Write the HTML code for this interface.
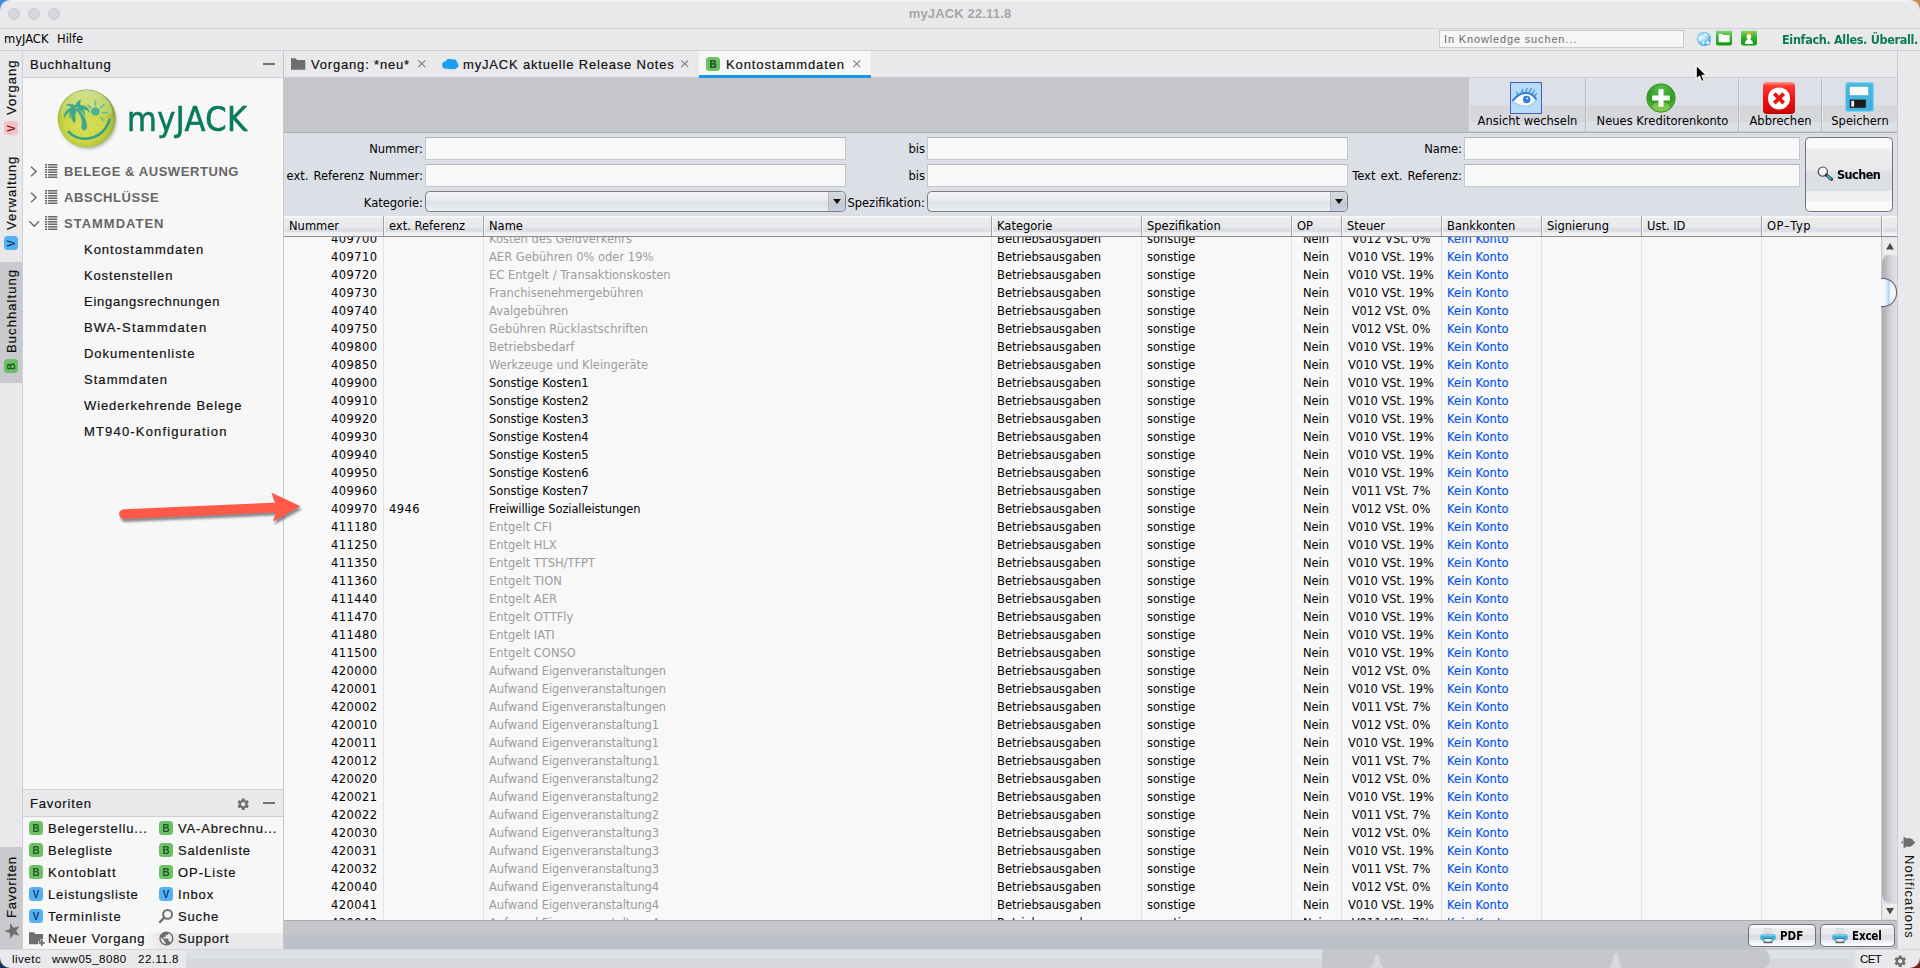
<!DOCTYPE html>
<html lang="de">
<head>
<meta charset="utf-8">
<title>myJACK 22.11.8</title>
<style>
*{box-sizing:border-box;margin:0;padding:0}
html,body{width:1920px;height:968px;overflow:hidden}
body{position:relative;background:#e9e9eb;font-family:"DejaVu Sans","Liberation Sans",sans-serif;font-size:11.5px;color:#000}
.abs{position:absolute}
svg{position:absolute;overflow:visible}
i{font-style:normal}
.lib{font-family:"Liberation Sans",sans-serif}
.dvc{font-family:"DejaVu Sans",sans-serif;transform:scaleX(.9);transform-origin:0 50%;white-space:nowrap}
/* title */
#title{left:0;top:0;width:1920px;height:29px;border-bottom:1px solid #cfd1d6;border-top:1px solid #f3f3f4;background:#e9e9eb}
#title .t{left:0;width:1920px;top:4.500px;text-align:center;font:bold 13px "Liberation Sans",sans-serif;letter-spacing:.15px;color:#a6a6a8}
.tl{width:12px;height:12px;border-radius:50%;background:#d7d8dc;border:1px solid #c6c9ce;top:7px}
#menu{left:0;top:29px;width:1920px;height:22px;border-bottom:1px solid #cdd0d5;background:#e9e9eb}
#menu span{position:absolute;top:3px;font-size:11.5px;white-space:nowrap}
/* left strip */
#lstrip{left:0;top:51px;width:23px;height:898px;border-right:1px solid #cdd0d5;background:#e9e9eb}
.vtxt{-webkit-text-stroke:.2px #111;position:absolute;white-space:nowrap;font:13px "Liberation Sans",sans-serif;letter-spacing:.85px;transform:rotate(-90deg);transform-origin:0 0;color:#111;line-height:15px;height:15px}
.badge{position:absolute;width:14px;height:14px;border-radius:3.5px;font:bold 11.5px "Liberation Sans",sans-serif;text-align:center;line-height:15px;letter-spacing:0}
.badge i{display:block;transform:scaleX(.86)}
.bg{background:#6dc066;color:#1e5a22}
.bb{background:#55b2f0;color:#0d3f73}
.bp{background:#f6c1c6;color:#8c1c1c}
/* sidebar */
#side{left:23px;top:51px;width:261px;height:898px;border-right:1px solid #c3c6cc;background:#f7f7f7}
.phead{-webkit-text-stroke:.2px #111;left:0;width:260px;height:27px;background:#e9e9eb;border-bottom:1px solid #cdd0d5;font:13px "Liberation Sans",sans-serif;letter-spacing:.85px;color:#111}
.phead span{position:absolute;left:7px;top:6px}
.tree1{left:41px;font:bold 13px "Liberation Sans",sans-serif;letter-spacing:.57px;color:#666;white-space:nowrap}
.tree2{-webkit-text-stroke:.2px #111;left:61px;font:13px "Liberation Sans",sans-serif;letter-spacing:.88px;color:#111;white-space:nowrap}
.fav{-webkit-text-stroke:.2px #111;position:absolute;font:13px "Liberation Sans",sans-serif;letter-spacing:.85px;color:#111;white-space:nowrap}
/* main */
#main{left:284px;top:51px;width:1613px;height:898px;background:#c4c6ca}
#tabs{left:0;top:0;width:1613px;height:27px;background:#e9e9eb;border-bottom:1px solid #c6c9ce}
.tab{-webkit-text-stroke:.2px #111;position:absolute;top:0;height:27px;font:13px "Liberation Sans",sans-serif;letter-spacing:.82px;color:#111;white-space:nowrap}
.tab span{position:absolute;top:6px}
.tbtn{position:absolute;top:0;height:54px;background:linear-gradient(#dde0e7 0,#dde0e7 50%,#d6d7db 50%,#d6d7db 82%,#dddfe6 83%,#dddfe6 100%);border-left:1px solid #e2e4ea;border-top:1px solid #e3e5ea;border-right:1px solid #b9bcc2;border-bottom:1px solid #c9ccd1;text-align:center;font-size:11.5px;white-space:nowrap}
.tbtn span{position:absolute;left:0;right:0;top:35px}
#filter{left:0;top:81px;width:1613px;height:85px;background:#dcdfe6}
.lbl{position:absolute;text-align:right;font-size:11.5px;white-space:nowrap;word-spacing:1.5px}
.inp{position:absolute;height:23px;background:#f8f8f8;border:1px solid #c4c6cb;border-top-color:#b0b2b7}
.combo{position:absolute;height:21px;border:1px solid #7b7c80;border-radius:4.5px;background:linear-gradient(#f4f4f6,#e9eaee 45%,#dcdfe6 55%,#e6e8ed 80%,#f0f1f4);overflow:hidden}
.combo b{position:absolute;right:0;top:0;width:17px;height:19px;background:linear-gradient(#d8dae0,#cdd0d7 50%,#c4c8d0 60%,#c6d3ea);border-left:1px solid #b5b8bf}
.combo b:after{content:"";position:absolute;left:4px;top:7px;border:4px solid transparent;border-top:5px solid #111;border-bottom:0}
.btn{position:absolute;border:1px solid #727377;border-radius:4.5px;background:linear-gradient(#fafafa 0,#f8f8f9 14%,#ececee 15%,#e9e9ec 45%,#dcdfe6 46%,#dcdfe6 72%,#eeeef0 73%,#efeff1 86%,#f9f9f9 87%);box-shadow:0 1px 0 rgba(255,255,255,.35)}
#thead{left:0;top:165px;width:1613px;height:21px;background:linear-gradient(#f6f6f7 0,#f6f6f7 2px,#ebebed 2.500px,#eaeaed 11px,#dcdfe6 12px,#dcdfe6 16px,#eeeef0 16.500px,#f3f3f5 20px);border-bottom:1px solid #8c8c90}
#thead span{position:absolute;top:3px;font-size:11.5px;white-space:nowrap}
#thead b{position:absolute;top:0;width:1px;height:20px;background:#a3a5aa;box-shadow:1px 0 0 #f6f6f8}
#tbody{left:0;top:186px;width:1597px;height:683px;background:#f8f8f8;overflow:hidden}
.r{position:relative;height:18px;line-height:18px;white-space:nowrap;font-size:11.5px}
.r span{position:absolute;top:0;height:18px}
.c1{left:0;width:93.500px;text-align:right;letter-spacing:.45px}
.c2{left:105px;letter-spacing:.45px}
.c3{left:205px;color:#9c9c9c}
.c3 .b{color:#000}
.c4{left:713px}.c5{left:863px}
.c6{left:1007px;width:50px;text-align:center}
.c7{left:1057px;width:100px;text-align:center}
.c8{left:1163px;color:#0452f2;-webkit-text-stroke:.15px #0452f2;letter-spacing:.05px}
.vl{position:absolute;top:0;width:1px;height:684px;background:#e0e2e7}
</style>
</head>
<body>
<div id="title" class="abs">
  <div class="abs tl" style="left:8px"></div><div class="abs tl" style="left:28px"></div><div class="abs tl" style="left:48px"></div>
  <div class="abs t">myJACK 22.11.8</div>
</div>

<div id="menu" class="abs">
  <span style="left:4px">myJACK</span><span style="left:57px">Hilfe</span>
  <div class="abs" style="left:1439px;top:1px;width:245px;height:18px;background:#f6f6f6;border:1px solid #c8cace"></div>
  <span class="lib" style="left:1444px;top:4px;font-size:11px;letter-spacing:.85px;color:#6b6b6b">In Knowledge suchen...</span>
  <!-- globe icon -->
  <svg style="left:1696px;top:2px" width="16" height="16" viewBox="0 0 16 16">
    <defs><radialGradient id="gl" cx=".42" cy=".38" r=".68"><stop offset="0" stop-color="#e4f6fd"/><stop offset=".55" stop-color="#7fcdf1"/><stop offset="1" stop-color="#3f9fe0"/></radialGradient></defs>
    <circle cx="8" cy="8" r="6.900" fill="url(#gl)"/>
    <path d="M2.600 5.500c1.600-1 3-.4 3.800.8.700 1.200-.5 2-1.500 2.600s-1.300 2.300-2.200 1.600zM7.800 2c1.800.1 3.500 1.100 4.300 2.700-.9.800-2.400.7-3.200-.3s-1.500-1.600-1.100-2.400zM6 10.500c1-.6 2.200-.2 2.500.8s-.4 2.300-1.300 2.700c-.9-.6-1.500-2.400-1.200-3.500z" fill="#f2fbff" opacity=".8"/>
    <circle cx="8" cy="8" r="6.600" fill="none" stroke="#4aa9e6" stroke-width=".6" stroke-dasharray="1 .8"/>
    <path d="M11.700 8.600l.9 1.800 2 .3-1.500 1.400.4 2-1.800-1-1.800 1 .4-2-1.500-1.400 2-.3z" fill="#fff" stroke="#3597e0" stroke-width=".6"/>
  </svg>
  <!-- green folder -->
  <svg style="left:1716px;top:.900px" width="16" height="15.400" viewBox="0 0 16 15.400">
    <defs><linearGradient id="gf" x1="0" y1="0" x2="0" y2="1"><stop offset="0" stop-color="#e8f6e0"/><stop offset=".1" stop-color="#7ccc6c"/><stop offset=".5" stop-color="#2db027"/><stop offset="1" stop-color="#179a15"/></linearGradient></defs>
    <rect x="0" y="0" width="16" height="15.400" rx="2.200" fill="url(#gf)"/>
    <path d="M2.600 4.500c0-.5.300-.8.800-.8h2.300l1.200 1.200h6c.5 0 .8.300.8.800v5.800c0 .5-.3.800-.8.800H3.400c-.5 0-.8-.3-.8-.8z" fill="#fbfbfb"/>
  </svg>
  <!-- green user -->
  <svg style="left:1741px;top:.900px" width="16" height="15.400" viewBox="0 0 16 15.400">
    <rect x="0" y="0" width="16" height="15.400" rx="2.200" fill="url(#gf)"/>
    <path d="M5.600 2l1.100 1.200L7.900 1.600l1.200 1.600L10.200 2v3H5.600z" fill="#f7a51c"/>
    <circle cx="7.900" cy="6.900" r="2.400" fill="#fff"/>
    <path d="M6.800 8.600h2.200c.1 1.500 2.700 2.300 2.900 4.200.1.700-.4 1.100-1 1.100H4.900c-.6 0-1.100-.4-1-1.100.2-1.900 2.800-2.700 2.900-4.200z" fill="#fff"/>
  </svg>
  <span class="dvc" style="left:1782px;top:3px;font-weight:bold;font-size:12.500px;letter-spacing:-.36px;color:#0b7a57">Einfach. Alles. Überall.</span>
</div>

<div id="lstrip" class="abs">
  <div class="vtxt" style="left:4px;top:64px;letter-spacing:1px">Vorgang</div>
  <div class="badge bp" style="left:4px;top:70px"><i style="transform:rotate(-90deg) scaleX(.86)">V</i></div>
  <div class="vtxt" style="left:4px;top:179px;letter-spacing:1px">Verwaltung</div>
  <div class="badge bb" style="left:4px;top:185px"><i style="transform:rotate(-90deg) scaleX(.86)">V</i></div>
  <div class="abs" style="left:0;top:211px;width:22px;height:121px;background:#c8cace"></div>
  <div class="vtxt" style="left:4px;top:302px;letter-spacing:1.08px">Buchhaltung</div>
  <div class="badge bg" style="left:4px;top:308px"><i style="transform:rotate(-90deg) scaleX(.86)">B</i></div>
  <div class="abs" style="left:0;top:796px;width:22px;height:102px;background:#c8cace"></div>
  <div class="vtxt" style="left:4px;top:867px">Favoriten</div>
  <svg style="left:3.500px;top:872px" width="16" height="16" viewBox="0 0 15 15"><path d="M0.300 5.800L5.600 5.500 7.500 0.500 9.400 5.500 14.700 5.800 10.600 9.100 12 14.300 7.500 11.400 3 14.300 4.400 9.100z" fill="#6e6e6e" transform="rotate(-90 7.500 7.500)"/></svg>
</div>

<div id="side" class="abs">
  <div class="abs phead" style="top:0"><span>Buchhaltung</span>
    <div class="abs" style="left:240px;top:12px;width:12px;height:2px;background:#727272"></div>
  </div>
  <!-- logo -->
  <svg style="left:32px;top:35px" width="64" height="66" viewBox="0 0 64 66">
    <defs>
      <radialGradient id="lg1" cx=".46" cy=".56" r=".56"><stop offset="0" stop-color="#dadd52"/><stop offset=".6" stop-color="#cfd648"/><stop offset=".86" stop-color="#a9bf3e"/><stop offset="1" stop-color="#7f9a30"/></radialGradient>
      <linearGradient id="lg2" x1="0" y1="0" x2="0" y2="1"><stop offset="0" stop-color="#dff0b0" stop-opacity=".75"/><stop offset="1" stop-color="#bcd66a" stop-opacity=".55"/></linearGradient>
      <filter id="lsh" x="-20%" y="-20%" width="150%" height="150%"><feGaussianBlur stdDeviation="1.500"/></filter>
    </defs>
    <circle cx="33.200" cy="34.600" r="28.600" fill="#7d828c" opacity=".5" filter="url(#lsh)"/>
    <circle cx="31.600" cy="32.500" r="29" fill="url(#lg1)"/>
    <path d="M5.200 27.500A26.600 26.600 0 0 1 58 27c-8 3.300-17 4.600-26 4.400S12.500 30 5.200 27.500z" fill="url(#lg2)"/>
    <g stroke="#e6e27a" stroke-width=".7" opacity=".7" fill="none"><path d="M30 40l-8 9M32 41l-2 11M35 40l5 10M37 38l10 7M27 38l-11 5"/></g>
    <g fill="#3ea88b" stroke="#3ea88b" stroke-width=".7" stroke-linejoin="round">
      <path d="M21 21.500c-3.500-.6-7.500.8-10 4-1.300 1.800-1.700 4-1.500 6.200 1.300-3.300 3.600-5.600 6.800-6.600-1.500 2-2.200 4.600-1.700 7 .8-2.900 2.800-5.200 5.600-6.300z"/>
      <path d="M21 20.500c-2.600-2.200-6.300-2.800-9.700-1.500 2.700.2 5 1.300 6.600 3.200z"/>
      <path d="M20.500 20.800c.3-3.100 2.200-5.700 5.100-6.800-.9 2-.9 4.300-.2 6.400z"/>
      <path d="M22.500 20.500c3.400-1.700 7.500-1 10 1.800 1 1.100 1.600 2.500 1.800 4-1.700-2.200-4.200-3.400-7-3.300 1.500 1.500 2.400 3.600 2.300 5.800-1.300-2.700-3.700-4.600-6.600-5.200z"/>
      <path d="M19.200 23.500c-2.300 2.600-3.200 6.300-2.200 9.600.4 1.500 1.200 2.700 2.200 3.700.9-1 1.300-2.300 1-3.700-.5-2.900-.2-6 .9-8.700z"/>
      <path d="M21.500 22.500c4.500 3 8 7.500 9.500 13 .8 2.800.8 5.400.3 7.200-.6 1.600-2.800 1.800-3.900.6-1-1-.9-2.500-.5-4 1-5-1-10.800-5.400-14.800z"/>
      <circle cx="40.400" cy="25.500" r="3.800" fill="#4db198"/>
    </g>
    <g stroke="#62bba2" stroke-width="1.700" stroke-linecap="round" fill="none">
      <path d="M40.400 15.200v4M32.900 19.100l2.900 2.900M49 18.600l-3.500 3M47.400 26.600h4.800M45.500 31.700l3 2.500"/>
    </g>
    <path d="M13.600 45.800C19 51.200 26 53.400 33 52.500c11-1.500 18.800-8.800 21.600-18.800" fill="none" stroke="#33a184" stroke-width="2.600" stroke-linecap="round"/>
  </svg>
  <div class="abs dvc" style="left:104px;top:47.800px;font-size:34px;letter-spacing:.43px;color:#0a7a5c;line-height:40px;-webkit-text-stroke:.6px #0a7a5c">myJACK</div>
  <!-- tree -->
  <svg style="left:6px;top:113px" width="30" height="70" viewBox="0 0 30 70" fill="none" stroke="#666" stroke-width="1.300">
    <path d="M2 2.800l5.200 4.700L2 12.200"/>
    <path d="M2 28.800l5.200 4.700L2 38.200"/>
    <path d="M0.400 57.200l4.800 5 4.800-5"/>
  </svg>
  <svg style="left:22px;top:113px" width="13" height="70" viewBox="0 0 13 70" fill="#666">
    <g id="li"><path d="M0 0h2.100v1.400H0zM3.100 0h9.200v1.400H3.100zM0 2.5h2.100v1.400H0zM3.100 2.5h9.200v1.400H3.100zM0 5h2.100v1.400H0zM3.100 5h9.200v1.400H3.100zM0 7.5h2.100v1.400H0zM3.100 7.5h9.200v1.400H3.100zM0 10h2.100v1.400H0zM3.100 10h9.200v1.400H3.100zM0 12.5h2.100v1.400H0zM3.100 12.5h9.200v1.400H3.100z"/></g>
    <use href="#li" y="26"/><use href="#li" y="52"/>
  </svg>
  <div class="abs tree1" style="top:113px">BELEGE &amp; AUSWERTUNG</div>
  <div class="abs tree1" style="top:139px">ABSCHLÜSSE</div>
  <div class="abs tree1" style="top:165px;letter-spacing:1px">STAMMDATEN</div>
  <div class="abs tree2" style="top:191px;letter-spacing:0.98px">Kontostammdaten</div>
  <div class="abs tree2" style="top:217px;letter-spacing:0.86px">Kostenstellen</div>
  <div class="abs tree2" style="top:243px;letter-spacing:0.74px">Eingangsrechnungen</div>
  <div class="abs tree2" style="top:269px;letter-spacing:1.16px">BWA-Stammdaten</div>
  <div class="abs tree2" style="top:295px;letter-spacing:0.97px">Dokumentenliste</div>
  <div class="abs tree2" style="top:321px;letter-spacing:1.04px">Stammdaten</div>
  <div class="abs tree2" style="top:347px;letter-spacing:0.9px">Wiederkehrende Belege</div>
  <div class="abs tree2" style="top:373px;letter-spacing:1.17px">MT940-Konfiguration</div>
  <!-- favoriten -->
  <div class="abs phead" style="top:738px;border-top:1px solid #cdd0d5;height:28px"><span>Favoriten</span>
    <svg style="left:212.800px;top:6.800px" width="14.400" height="14.400" viewBox="0 0 24 24"><path fill="#6e6e6e" d="M19.140 12.940a7.400 7.400 0 0 0 .06-.940c0-.320-.020-.640-.070-.940l2.030-1.580a.490.490 0 0 0 .120-.610l-1.920-3.320a.490.490 0 0 0-.590-.220l-2.390.960a7.030 7.030 0 0 0-1.620-.940l-.360-2.540a.480.480 0 0 0-.480-.410h-3.840a.480.480 0 0 0-.470.410l-.360 2.540c-.590.240-1.130.570-1.620.940l-2.390-.960a.480.480 0 0 0-.590.220L2.740 8.870a.480.480 0 0 0 .120.610l2.030 1.580a7.300 7.300 0 0 0-.080.940c0 .310.020.640.070.940l-2.030 1.580a.490.490 0 0 0-.120.610l1.920 3.320c.120.220.370.290.590.220l2.390-.960c.500.380 1.030.700 1.620.940l.360 2.540c.050.240.240.410.480.410h3.840c.240 0 .440-.170.470-.410l.360-2.540c.590-.240 1.130-.560 1.620-.940l2.390.960c.220.080.470 0 .590-.220l1.920-3.320a.490.490 0 0 0-.120-.610zM12 15.600A3.610 3.610 0 0 1 8.400 12c0-1.980 1.620-3.600 3.600-3.600s3.600 1.620 3.600 3.600-1.620 3.600-3.600 3.600z"/></svg>
    <div class="abs" style="left:240px;top:12px;width:12px;height:2px;background:#727272"></div>
  </div>
  <div class="abs" style="left:122px;top:882px;width:138px;height:16px;background:linear-gradient(90deg,rgba(233,233,235,0) 0,#e9e9eb 14px)"></div>
  <div class="badge bg" style="left:6px;top:770px"><i>B</i></div><div class="fav" style="left:25px;top:770px">Belegerstellu...</div>
  <div class="badge bg" style="left:136px;top:770px"><i>B</i></div><div class="fav" style="left:155px;top:770px">VA-Abrechnu...</div>
  <div class="badge bg" style="left:6px;top:792px"><i>B</i></div><div class="fav" style="left:25px;top:792px">Belegliste</div>
  <div class="badge bg" style="left:136px;top:792px"><i>B</i></div><div class="fav" style="left:155px;top:792px">Saldenliste</div>
  <div class="badge bg" style="left:6px;top:814px"><i>B</i></div><div class="fav" style="left:25px;top:814px;letter-spacing:1px">Kontoblatt</div>
  <div class="badge bg" style="left:136px;top:814px"><i>B</i></div><div class="fav" style="left:155px;top:814px;letter-spacing:1px">OP-Liste</div>
  <div class="badge bb" style="left:6px;top:836px"><i>V</i></div><div class="fav" style="left:25px;top:836px">Leistungsliste</div>
  <div class="badge bb" style="left:136px;top:836px"><i>V</i></div><div class="fav" style="left:155px;top:836px">Inbox</div>
  <div class="badge bb" style="left:6px;top:858px"><i>V</i></div><div class="fav" style="left:25px;top:858px;letter-spacing:1.05px">Terminliste</div>
  <svg style="left:136px;top:858px" width="14" height="14" viewBox="0 0 14 14" fill="none" stroke="#6e6e6e"><circle cx="8.600" cy="5.400" r="4.400" stroke-width="2"/><path d="M5.300 8.700L1 13" stroke-width="2.400" stroke-linecap="round"/></svg>
  <div class="fav" style="left:155px;top:858px">Suche</div>
  <svg style="left:6px;top:881px" width="16" height="14" viewBox="0 0 16 14" fill="#6e6e6e"><path d="M0 0.300h4.800l1.500 1.700H14v5.200h-2.600v2.300H9.100v2.700H0z"/><path d="M11.800 7.900h1.900v2h2v1.900h-2v2h-1.900v-2h-2V9.900h2z"/></svg>
  <div class="fav" style="left:25px;top:880px;letter-spacing:.75px">Neuer Vorgang</div>
  <svg style="left:134.600px;top:878.600px" width="16.800" height="16.800" viewBox="0 0 24 24"><path fill="#6e6e6e" d="M12 2C6.480 2 2 6.480 2 12s4.480 10 10 10 10-4.480 10-10S17.520 2 12 2zm-1 17.930c-3.950-.490-7-3.850-7-7.930 0-.620.080-1.210.210-1.790L9 15v1c0 1.100.9 2 2 2v1.930zm6.900-2.540c-.260-.810-1-1.390-1.900-1.390h-1v-3c0-.550-.450-1-1-1H8v-2h2c.550 0 1-.450 1-1V7h2c1.100 0 2-.9 2-2v-.410c2.930 1.190 5 4.060 5 7.410 0 2.080-.8 3.970-2.100 5.390z"/></svg>
  <div class="fav" style="left:155px;top:880px">Support</div>
</div>

<div class="abs" style="left:1897px;top:51px;width:23px;height:898px;background:#e9e9eb;border-left:1px solid #c9ccd1"></div>
<div id="main" class="abs">
  <div id="tabs" class="abs">
    <div class="tab" style="left:0;width:150px">
      <svg style="left:7px;top:7px" width="15" height="12" viewBox="0 0 15 12"><path d="M0 0.300h4.600l1.500 1.700H14.300V11.700H0z" fill="#6e6e6e"/></svg>
      <span style="left:27px">Vorgang: *neu*</span>
      <svg style="left:134px;top:9px" width="7.500" height="7.500" viewBox="0 0 8 8"><path d="M0.300 0.300l7.400 7.400M7.700 0.300L0.300 7.700" stroke="#7a7a7a" stroke-width="1.100"/></svg>
    </div>
    <div class="tab" style="left:150px;width:265px">
      <svg style="left:0;top:0" width="30" height="27" viewBox="0 0 30 27" fill="#1c9ff0"><circle cx="12" cy="14" r="3.8"/><circle cx="15.5" cy="11.5" r="3.7"/><circle cx="19.5" cy="11.8" r="3.5"/><circle cx="21.5" cy="14.2" r="2.9"/><circle cx="16" cy="15" r="3.3"/><circle cx="19.5" cy="15.4" r="2.9"/></svg>
      <span style="left:29px">myJACK aktuelle Release Notes</span>
      <svg style="left:247px;top:9px" width="7.500" height="7.500" viewBox="0 0 8 8"><path d="M0.300 0.300l7.400 7.400M7.700 0.300L0.300 7.700" stroke="#7a7a7a" stroke-width="1.100"/></svg>
    </div>
    <div class="tab" style="left:415px;width:172px;background:#f7f7f7;border-bottom:3px solid #1a93ea">
      <div class="badge bg" style="left:7px;top:6px;letter-spacing:0"><i>B</i></div>
      <span style="left:27px;letter-spacing:.9px">Kontostammdaten</span>
      <svg style="left:154px;top:9px" width="7.500" height="7.500" viewBox="0 0 8 8"><path d="M0.300 0.300l7.400 7.400M7.700 0.300L0.300 7.700" stroke="#7a7a7a" stroke-width="1.100"/></svg>
    </div>
  </div>
  <!-- toolbar -->
  <div class="abs" style="left:0;top:27px;width:1613px;height:54px">
    <div class="tbtn" style="left:1185px;width:117px">
      <div class="abs" style="left:40px;top:3px;width:32px;height:32px;background:#b6dcf6;border:1px solid #4a5bc4"></div>
      <svg style="left:40px;top:3px" width="32" height="32" viewBox="0 0 32 32">
        <g fill="none" stroke="#4a8fe6" stroke-width="1.300" stroke-linecap="round"><path d="M7.400 12.800L7 10.200M11.500 11.200L12.800 7.300M15.400 10.400L17.200 6.300M19 10.800L21.200 6.400M22.400 12L24.200 8.300M24.800 13.800L26.400 11.500"/></g>
        <path d="M2 19.300C6 14 10.500 11 15.500 11c4.600 0 8 2.600 10.300 6.300-2.600 4.300-6 6.800-10 6.900C11.300 24.300 7 22 2 19.300z" fill="#fafafa"/>
        <path d="M2.800 18.600C6.600 14 10.700 10.900 15.500 10.900c4.600 0 8.200 2.500 10.500 6.300" fill="none" stroke="#3a84d6" stroke-width="2.100" stroke-linecap="round"/>
        <path d="M25.800 17.300c-2.600 4.300-6 6.800-10 6.900C11.300 24.300 7 22 2 19.300" fill="none" stroke="#8fc0f2" stroke-width=".9"/>
        <circle cx="16.700" cy="17.500" r="3.700" fill="#2f7fd4"/><circle cx="17.200" cy="16.400" r="1" fill="#e8f2fc"/>
      </svg>
      <span>Ansicht wechseln</span>
    </div>
    <div class="tbtn" style="left:1302px;width:153px">
      <svg style="left:59px;top:4px" width="30" height="30" viewBox="0 0 32 32">
        <defs><radialGradient id="gp" cx=".5" cy=".2" r=".9"><stop offset="0" stop-color="#58c04a"/><stop offset=".55" stop-color="#2c9a22"/><stop offset="1" stop-color="#7ccf45"/></radialGradient></defs>
        <circle cx="16" cy="16" r="15.200" fill="url(#gp)" stroke="#2a8a20" stroke-width=".8"/>
        <ellipse cx="16" cy="25" rx="9" ry="5" fill="#b5e27a" opacity=".45"/>
        <path d="M13.300 6.600h5.400v6.700h6.700v5.400h-6.700v6.700h-5.400v-6.700H6.600v-5.400h6.700z" fill="#fff"/>
      </svg>
      <span>Neues Kreditorenkonto</span>
    </div>
    <div class="tbtn" style="left:1455px;width:83px">
      <svg style="left:23px;top:3px" width="32" height="33" viewBox="0 0 32 33">
        <defs><linearGradient id="gr" x1="0" y1="0" x2="0" y2="1"><stop offset="0" stop-color="#ff9a8c"/><stop offset=".12" stop-color="#ff3b30"/><stop offset=".5" stop-color="#f01414"/><stop offset=".9" stop-color="#d40808"/><stop offset="1" stop-color="#b80000"/></linearGradient></defs>
        <rect x="0" y="0" width="32" height="32" rx="4" fill="url(#gr)"/>
        <circle cx="16" cy="16.400" r="11" fill="#fff"/>
        <path d="M11.300 11.700l9.400 9.400M20.700 11.700l-9.400 9.400" stroke="#ec1212" stroke-width="3.800"/>
      </svg>
      <span>Abbrechen</span>
    </div>
    <div class="tbtn" style="left:1538px;width:75px;border-right:0">
      <svg style="left:22px;top:3px" width="29" height="30" viewBox="0 0 29 30">
        <defs><linearGradient id="gs" x1="0" y1="0" x2="0" y2="1"><stop offset="0" stop-color="#49b7e2"/><stop offset="1" stop-color="#3fb0df"/></linearGradient></defs>
        <rect x=".6" y=".6" width="27.800" height="28.800" rx="2.500" fill="url(#gs)" stroke="#7fd3f0" stroke-width="1.200"/>
        <rect x="4.800" y="4.800" width="18.400" height="8.400" fill="#fbfbfb"/>
        <rect x="4.800" y="17.600" width="16" height="8.200" fill="#1c1c1c"/>
        <rect x="6.300" y="18.800" width="2.800" height="5.800" fill="#f4f4f4"/>
      </svg>
      <span>Speichern</span>
    </div>
  </div>
  <div class="abs" style="left:0;top:81px;width:1613px;height:1px;background:#a9abaf;z-index:2"></div>
  <!-- filter -->
  <div id="filter" class="abs">
    <div class="lbl" style="right:1474px;top:10px">Nummer:</div>
    <div class="lbl" style="right:1474px;top:37px">ext. Referenz Nummer:</div>
    <div class="lbl" style="right:1474px;top:63.500px">Kategorie:</div>
    <div class="inp" style="left:141px;top:5px;width:421px"></div>
    <div class="inp" style="left:141px;top:32px;width:421px"></div>
    <div class="combo" style="left:141px;top:59px;width:421px"><b></b></div>
    <div class="lbl" style="right:972px;top:10px">bis</div>
    <div class="lbl" style="right:972px;top:37px">bis</div>
    <div class="lbl" style="right:972px;top:63.500px">Spezifikation:</div>
    <div class="inp" style="left:643px;top:5px;width:421px"></div>
    <div class="inp" style="left:643px;top:32px;width:421px"></div>
    <div class="combo" style="left:643px;top:59px;width:421px"><b></b></div>
    <div class="lbl" style="right:435px;top:10px">Name:</div>
    <div class="lbl" style="right:435px;top:37px">Text ext. Referenz:</div>
    <div class="inp" style="left:1180px;top:5px;width:336px"></div>
    <div class="inp" style="left:1180px;top:32px;width:336px"></div>
    <div class="btn" style="left:1521px;top:5px;width:88px;height:75px">
      <svg style="left:11px;top:28px" width="17" height="15" viewBox="0 0 17 15"><circle cx="5.800" cy="5.600" r="4.600" fill="#f4f6f8" stroke="#444" stroke-width="1.200"/><path d="M9.300 9l5.200 4.200" stroke="#333" stroke-width="3.200" stroke-linecap="round"/><path d="M10.600 10l3.400 2.800" stroke="#35b5d8" stroke-width="1.700" stroke-linecap="round"/></svg>
      <div class="abs dvc" style="left:31px;top:29px;font-weight:bold;font-size:12.500px;letter-spacing:-.57px">Suchen</div>
    </div>
  </div>
  <div id="thead" class="abs">
    <span style="left:5px">Nummer</span><b style="left:99px"></b>
    <span style="left:105px">ext. Referenz</span><b style="left:199px"></b>
    <span style="left:205px">Name</span><b style="left:707px"></b>
    <span style="left:713px">Kategorie</span><b style="left:857px"></b>
    <span style="left:863px">Spezifikation</span><b style="left:1007px"></b>
    <span style="left:1013px">OP</span><b style="left:1057px"></b>
    <span style="left:1063px">Steuer</span><b style="left:1157px"></b>
    <span style="left:1163px">Bankkonten</span><b style="left:1257px"></b>
    <span style="left:1263px">Signierung</span><b style="left:1357px"></b>
    <span style="left:1363px">Ust. ID</span><b style="left:1477px"></b>
    <span style="left:1483px;letter-spacing:.5px">OP–Typ</span><b style="left:1597px"></b>
  </div>
  <div id="tbody" class="abs">
    <div class="vl" style="left:99px"></div><div class="vl" style="left:199px"></div><div class="vl" style="left:707px"></div><div class="vl" style="left:857px"></div><div class="vl" style="left:1007px"></div><div class="vl" style="left:1057px"></div><div class="vl" style="left:1157px"></div><div class="vl" style="left:1257px"></div><div class="vl" style="left:1357px"></div><div class="vl" style="left:1477px"></div>
    <div style="position:absolute;left:0;top:-7px;width:1597px">
<div class="r"><span class="c1">409700</span><span class="c2"></span><span class="c3"><i>Kosten des Geldverkehrs</i></span><span class="c4">Betriebsausgaben</span><span class="c5">sonstige</span><span class="c6">Nein</span><span class="c7">V012 VSt. 0%</span><span class="c8">Kein Konto</span></div>
<div class="r"><span class="c1">409710</span><span class="c2"></span><span class="c3"><i>AER Gebühren 0% oder 19%</i></span><span class="c4">Betriebsausgaben</span><span class="c5">sonstige</span><span class="c6">Nein</span><span class="c7">V010 VSt. 19%</span><span class="c8">Kein Konto</span></div>
<div class="r"><span class="c1">409720</span><span class="c2"></span><span class="c3"><i>EC Entgelt / Transaktionskosten</i></span><span class="c4">Betriebsausgaben</span><span class="c5">sonstige</span><span class="c6">Nein</span><span class="c7">V010 VSt. 19%</span><span class="c8">Kein Konto</span></div>
<div class="r"><span class="c1">409730</span><span class="c2"></span><span class="c3"><i>Franchisenehmergebühren</i></span><span class="c4">Betriebsausgaben</span><span class="c5">sonstige</span><span class="c6">Nein</span><span class="c7">V010 VSt. 19%</span><span class="c8">Kein Konto</span></div>
<div class="r"><span class="c1">409740</span><span class="c2"></span><span class="c3"><i>Avalgebühren</i></span><span class="c4">Betriebsausgaben</span><span class="c5">sonstige</span><span class="c6">Nein</span><span class="c7">V012 VSt. 0%</span><span class="c8">Kein Konto</span></div>
<div class="r"><span class="c1">409750</span><span class="c2"></span><span class="c3"><i>Gebühren Rücklastschriften</i></span><span class="c4">Betriebsausgaben</span><span class="c5">sonstige</span><span class="c6">Nein</span><span class="c7">V012 VSt. 0%</span><span class="c8">Kein Konto</span></div>
<div class="r"><span class="c1">409800</span><span class="c2"></span><span class="c3"><i>Betriebsbedarf</i></span><span class="c4">Betriebsausgaben</span><span class="c5">sonstige</span><span class="c6">Nein</span><span class="c7">V010 VSt. 19%</span><span class="c8">Kein Konto</span></div>
<div class="r"><span class="c1">409850</span><span class="c2"></span><span class="c3"><i>Werkzeuge und Kleingeräte</i></span><span class="c4">Betriebsausgaben</span><span class="c5">sonstige</span><span class="c6">Nein</span><span class="c7">V010 VSt. 19%</span><span class="c8">Kein Konto</span></div>
<div class="r"><span class="c1">409900</span><span class="c2"></span><span class="c3"><i class="b">Sonstige Kosten1</i></span><span class="c4">Betriebsausgaben</span><span class="c5">sonstige</span><span class="c6">Nein</span><span class="c7">V010 VSt. 19%</span><span class="c8">Kein Konto</span></div>
<div class="r"><span class="c1">409910</span><span class="c2"></span><span class="c3"><i class="b">Sonstige Kosten2</i></span><span class="c4">Betriebsausgaben</span><span class="c5">sonstige</span><span class="c6">Nein</span><span class="c7">V010 VSt. 19%</span><span class="c8">Kein Konto</span></div>
<div class="r"><span class="c1">409920</span><span class="c2"></span><span class="c3"><i class="b">Sonstige Kosten3</i></span><span class="c4">Betriebsausgaben</span><span class="c5">sonstige</span><span class="c6">Nein</span><span class="c7">V010 VSt. 19%</span><span class="c8">Kein Konto</span></div>
<div class="r"><span class="c1">409930</span><span class="c2"></span><span class="c3"><i class="b">Sonstige Kosten4</i></span><span class="c4">Betriebsausgaben</span><span class="c5">sonstige</span><span class="c6">Nein</span><span class="c7">V010 VSt. 19%</span><span class="c8">Kein Konto</span></div>
<div class="r"><span class="c1">409940</span><span class="c2"></span><span class="c3"><i class="b">Sonstige Kosten5</i></span><span class="c4">Betriebsausgaben</span><span class="c5">sonstige</span><span class="c6">Nein</span><span class="c7">V010 VSt. 19%</span><span class="c8">Kein Konto</span></div>
<div class="r"><span class="c1">409950</span><span class="c2"></span><span class="c3"><i class="b">Sonstige Kosten6</i></span><span class="c4">Betriebsausgaben</span><span class="c5">sonstige</span><span class="c6">Nein</span><span class="c7">V010 VSt. 19%</span><span class="c8">Kein Konto</span></div>
<div class="r"><span class="c1">409960</span><span class="c2"></span><span class="c3"><i class="b">Sonstige Kosten7</i></span><span class="c4">Betriebsausgaben</span><span class="c5">sonstige</span><span class="c6">Nein</span><span class="c7">V011 VSt. 7%</span><span class="c8">Kein Konto</span></div>
<div class="r"><span class="c1">409970</span><span class="c2">4946</span><span class="c3"><i class="b" style="letter-spacing:-.12px">Freiwillige Sozialleistungen</i></span><span class="c4">Betriebsausgaben</span><span class="c5">sonstige</span><span class="c6">Nein</span><span class="c7">V012 VSt. 0%</span><span class="c8">Kein Konto</span></div>
<div class="r"><span class="c1">411180</span><span class="c2"></span><span class="c3"><i>Entgelt CFI</i></span><span class="c4">Betriebsausgaben</span><span class="c5">sonstige</span><span class="c6">Nein</span><span class="c7">V010 VSt. 19%</span><span class="c8">Kein Konto</span></div>
<div class="r"><span class="c1">411250</span><span class="c2"></span><span class="c3"><i>Entgelt HLX</i></span><span class="c4">Betriebsausgaben</span><span class="c5">sonstige</span><span class="c6">Nein</span><span class="c7">V010 VSt. 19%</span><span class="c8">Kein Konto</span></div>
<div class="r"><span class="c1">411350</span><span class="c2"></span><span class="c3"><i>Entgelt TTSH/TFPT</i></span><span class="c4">Betriebsausgaben</span><span class="c5">sonstige</span><span class="c6">Nein</span><span class="c7">V010 VSt. 19%</span><span class="c8">Kein Konto</span></div>
<div class="r"><span class="c1">411360</span><span class="c2"></span><span class="c3"><i>Entgelt TION</i></span><span class="c4">Betriebsausgaben</span><span class="c5">sonstige</span><span class="c6">Nein</span><span class="c7">V010 VSt. 19%</span><span class="c8">Kein Konto</span></div>
<div class="r"><span class="c1">411440</span><span class="c2"></span><span class="c3"><i>Entgelt AER</i></span><span class="c4">Betriebsausgaben</span><span class="c5">sonstige</span><span class="c6">Nein</span><span class="c7">V010 VSt. 19%</span><span class="c8">Kein Konto</span></div>
<div class="r"><span class="c1">411470</span><span class="c2"></span><span class="c3"><i>Entgelt OTTFly</i></span><span class="c4">Betriebsausgaben</span><span class="c5">sonstige</span><span class="c6">Nein</span><span class="c7">V010 VSt. 19%</span><span class="c8">Kein Konto</span></div>
<div class="r"><span class="c1">411480</span><span class="c2"></span><span class="c3"><i>Entgelt IATI</i></span><span class="c4">Betriebsausgaben</span><span class="c5">sonstige</span><span class="c6">Nein</span><span class="c7">V010 VSt. 19%</span><span class="c8">Kein Konto</span></div>
<div class="r"><span class="c1">411500</span><span class="c2"></span><span class="c3"><i>Entgelt CONSO</i></span><span class="c4">Betriebsausgaben</span><span class="c5">sonstige</span><span class="c6">Nein</span><span class="c7">V010 VSt. 19%</span><span class="c8">Kein Konto</span></div>
<div class="r"><span class="c1">420000</span><span class="c2"></span><span class="c3"><i style="letter-spacing:-.12px">Aufwand Eigenveranstaltungen</i></span><span class="c4">Betriebsausgaben</span><span class="c5">sonstige</span><span class="c6">Nein</span><span class="c7">V012 VSt. 0%</span><span class="c8">Kein Konto</span></div>
<div class="r"><span class="c1">420001</span><span class="c2"></span><span class="c3"><i style="letter-spacing:-.12px">Aufwand Eigenveranstaltungen</i></span><span class="c4">Betriebsausgaben</span><span class="c5">sonstige</span><span class="c6">Nein</span><span class="c7">V010 VSt. 19%</span><span class="c8">Kein Konto</span></div>
<div class="r"><span class="c1">420002</span><span class="c2"></span><span class="c3"><i style="letter-spacing:-.12px">Aufwand Eigenveranstaltungen</i></span><span class="c4">Betriebsausgaben</span><span class="c5">sonstige</span><span class="c6">Nein</span><span class="c7">V011 VSt. 7%</span><span class="c8">Kein Konto</span></div>
<div class="r"><span class="c1">420010</span><span class="c2"></span><span class="c3"><i style="letter-spacing:-.12px">Aufwand Eigenveranstaltung1</i></span><span class="c4">Betriebsausgaben</span><span class="c5">sonstige</span><span class="c6">Nein</span><span class="c7">V012 VSt. 0%</span><span class="c8">Kein Konto</span></div>
<div class="r"><span class="c1">420011</span><span class="c2"></span><span class="c3"><i style="letter-spacing:-.12px">Aufwand Eigenveranstaltung1</i></span><span class="c4">Betriebsausgaben</span><span class="c5">sonstige</span><span class="c6">Nein</span><span class="c7">V010 VSt. 19%</span><span class="c8">Kein Konto</span></div>
<div class="r"><span class="c1">420012</span><span class="c2"></span><span class="c3"><i style="letter-spacing:-.12px">Aufwand Eigenveranstaltung1</i></span><span class="c4">Betriebsausgaben</span><span class="c5">sonstige</span><span class="c6">Nein</span><span class="c7">V011 VSt. 7%</span><span class="c8">Kein Konto</span></div>
<div class="r"><span class="c1">420020</span><span class="c2"></span><span class="c3"><i style="letter-spacing:-.12px">Aufwand Eigenveranstaltung2</i></span><span class="c4">Betriebsausgaben</span><span class="c5">sonstige</span><span class="c6">Nein</span><span class="c7">V012 VSt. 0%</span><span class="c8">Kein Konto</span></div>
<div class="r"><span class="c1">420021</span><span class="c2"></span><span class="c3"><i style="letter-spacing:-.12px">Aufwand Eigenveranstaltung2</i></span><span class="c4">Betriebsausgaben</span><span class="c5">sonstige</span><span class="c6">Nein</span><span class="c7">V010 VSt. 19%</span><span class="c8">Kein Konto</span></div>
<div class="r"><span class="c1">420022</span><span class="c2"></span><span class="c3"><i style="letter-spacing:-.12px">Aufwand Eigenveranstaltung2</i></span><span class="c4">Betriebsausgaben</span><span class="c5">sonstige</span><span class="c6">Nein</span><span class="c7">V011 VSt. 7%</span><span class="c8">Kein Konto</span></div>
<div class="r"><span class="c1">420030</span><span class="c2"></span><span class="c3"><i style="letter-spacing:-.12px">Aufwand Eigenveranstaltung3</i></span><span class="c4">Betriebsausgaben</span><span class="c5">sonstige</span><span class="c6">Nein</span><span class="c7">V012 VSt. 0%</span><span class="c8">Kein Konto</span></div>
<div class="r"><span class="c1">420031</span><span class="c2"></span><span class="c3"><i style="letter-spacing:-.12px">Aufwand Eigenveranstaltung3</i></span><span class="c4">Betriebsausgaben</span><span class="c5">sonstige</span><span class="c6">Nein</span><span class="c7">V010 VSt. 19%</span><span class="c8">Kein Konto</span></div>
<div class="r"><span class="c1">420032</span><span class="c2"></span><span class="c3"><i style="letter-spacing:-.12px">Aufwand Eigenveranstaltung3</i></span><span class="c4">Betriebsausgaben</span><span class="c5">sonstige</span><span class="c6">Nein</span><span class="c7">V011 VSt. 7%</span><span class="c8">Kein Konto</span></div>
<div class="r"><span class="c1">420040</span><span class="c2"></span><span class="c3"><i style="letter-spacing:-.12px">Aufwand Eigenveranstaltung4</i></span><span class="c4">Betriebsausgaben</span><span class="c5">sonstige</span><span class="c6">Nein</span><span class="c7">V012 VSt. 0%</span><span class="c8">Kein Konto</span></div>
<div class="r"><span class="c1">420041</span><span class="c2"></span><span class="c3"><i style="letter-spacing:-.12px">Aufwand Eigenveranstaltung4</i></span><span class="c4">Betriebsausgaben</span><span class="c5">sonstige</span><span class="c6">Nein</span><span class="c7">V010 VSt. 19%</span><span class="c8">Kein Konto</span></div>
<div class="r"><span class="c1">420042</span><span class="c2"></span><span class="c3"><i style="letter-spacing:-.12px">Aufwand Eigenveranstaltung4</i></span><span class="c4">Betriebsausgaben</span><span class="c5">sonstige</span><span class="c6">Nein</span><span class="c7">V011 VSt. 7%</span><span class="c8">Kein Konto</span></div>
    </div>
  </div>
  <!-- scrollbar -->
  <div class="abs" style="left:1597px;top:186px;width:16px;height:683px;background:#dcdfe6;border-left:1px solid #c6c8cd">
    <div class="abs" style="left:0;top:18px;width:15px;height:648px;border-radius:8px 8px 8px 8px/9px 9px 9px 9px;background:linear-gradient(90deg,#a9abaf 0,#b9bbc0 25%,#cfd1d6 55%,#dfe1e6 100%)"></div>
    <div class="abs" style="left:-1px;top:41px;width:16px;height:29px;border:1px solid #5a6470;border-left:0;border-radius:0 14px 14px 0/0 14px 14px 0;background:linear-gradient(90deg,#fafafa 0,#f2f2f2 30%,#bfe0fb 45%,#a9d4f8 55%,#f4f4f4 62%,#f7f7f7 100%)"></div>
    <div class="abs" style="left:1px;top:1px;width:14px;height:17px;background:#ececef"></div><svg style="left:3.500px;top:6px" width="8" height="7" viewBox="0 0 9 8"><path d="M4.500 0L9 7.500H0z" fill="#4a4a4a"/></svg>
    <div class="abs" style="left:1px;top:667px;width:14px;height:15px;background:#ececef"></div><svg style="left:3.500px;top:671px" width="8" height="7" viewBox="0 0 9 8"><path d="M0 0h9L4.500 7.500z" fill="#4a4a4a"/></svg>
  </div>
  <!-- bottom bar -->
  <div class="abs" style="left:0;top:869px;width:1613px;height:29px;background:linear-gradient(#c4c6ca 0,#c4c6ca 49%,#bcc0c8 49%,#bcc0c8 100%);border-top:1px solid #a9abb0">
    <div class="btn" style="left:1464px;top:2.500px;width:67.500px;height:23px;border-radius:4px">
      <svg style="left:11px;top:3px" width="16" height="16" viewBox="0 0 16 16"><use href="#prn"/></svg>
      <div class="abs dvc" style="left:31px;top:4px;font-weight:bold;font-size:11.500px">PDF</div>
    </div>
    <div class="btn" style="left:1536px;top:2.500px;width:74.500px;height:23px;border-radius:4px">
      <svg style="left:11px;top:3px" width="16" height="16" viewBox="0 0 16 16"><use href="#prn"/></svg>
      <div class="abs dvc" style="left:31px;top:4px;font-weight:bold;font-size:11.500px;letter-spacing:-.2px">Excel</div>
    </div>
  </div>
</div>
<svg width="0" height="0"><defs><g id="prn">
  <path d="M4.300 0.300h5.600l1.800 1.800v5.200H4.300z" fill="#e6e6e6" stroke="#bdbdbd" stroke-width=".5"/>
  <path d="M5.800 3.600h3.400v2.200H5.800z" fill="#cfcfcf"/>
  <rect x="0.300" y="6.200" width="15.400" height="6.200" rx="2" fill="#3fb1dc"/>
  <path d="M1.200 7.200h13.600" stroke="#8fd8f2" stroke-width="1"/>
  <rect x="3.600" y="10.200" width="8.800" height="5" fill="#5a5f66"/>
  <rect x="4.400" y="11" width="7.200" height="2.600" fill="#d6f1fa"/>
</g></defs></svg>
<!-- notifications strip -->
<div class="abs lib" style="left:1917px;top:855px;font-size:13px;letter-spacing:1px;white-space:nowrap;transform:rotate(90deg);transform-origin:0 0;line-height:15px;color:#111">Notifications</div>
<svg style="left:1900px;top:833.500px" width="17" height="17" viewBox="0 0 24 24"><path transform="rotate(90 12 12)" fill="#6e6e6e" d="M12 22c1.100 0 2-.9 2-2h-4c0 1.100.89 2 2 2zm6-6v-5c0-3.070-1.640-5.640-4.500-6.320V4c0-.830-.670-1.500-1.500-1.500s-1.500.670-1.500 1.500v.680C7.630 5.360 6 7.920 6 11v5l-2 2v1h16v-1l-2-2z"/></svg>

<div class="abs lib" style="left:0;top:949px;width:1920px;height:19px;background:#e9e9eb;border-top:1px solid #d3d5d9;font-size:11.500px;letter-spacing:.5px">
  <div class="abs" style="left:186px;top:0;width:1666px;height:18px;background:linear-gradient(#dde0e7 0,#dde0e7 50%,#d7d8dc 50%,#d7d8dc 100%)"></div>
  <div class="abs" style="left:1852px;top:0;width:6px;height:18px;background:linear-gradient(90deg,#dadbdf,#e9e9eb)"></div>
  <div class="abs" style="left:1322px;top:-1px;width:448px;height:20px;background:#c5c7cb;border-radius:0 10px 10px 0/0 12px 12px 0"></div>
  <svg style="left:1368px;top:4px" width="18" height="15" viewBox="0 0 18 15"><path d="M0 15C5 13 6 8 7 2.500 7.500 0 10.500 0 11 2.500 12 8 13 13 18 15z" fill="#d9dade"/></svg>
  <svg style="left:1607px;top:3px" width="18" height="16" viewBox="0 0 18 16"><path d="M0 16C5 14 6 8 7 2.500 7.500 0 10.500 0 11 2.500 12 8 13 14 18 16z" fill="#d9dade"/></svg>
  <span class="abs" style="left:12px;top:3px">livetc</span>
  <span class="abs" style="left:52px;top:3px">www05_8080</span>
  <span class="abs" style="left:138px;top:3px">22.11.8</span>
  <span class="abs" style="left:1860px;top:3px;letter-spacing:-.6px">CET</span>
  <svg style="left:1892.800px;top:3.800px" width="14.400" height="14.400" viewBox="0 0 24 24"><path fill="#6e6e6e" d="M19.140 12.940a7.400 7.400 0 0 0 .06-.940c0-.320-.020-.640-.070-.940l2.030-1.580a.490.490 0 0 0 .120-.610l-1.920-3.320a.490.490 0 0 0-.590-.220l-2.390.960a7.030 7.030 0 0 0-1.620-.940l-.360-2.540a.480.480 0 0 0-.480-.410h-3.840a.480.480 0 0 0-.470.410l-.360 2.540c-.590.240-1.130.570-1.620.940l-2.390-.960a.480.480 0 0 0-.590.220L2.740 8.870a.480.480 0 0 0 .120.610l2.030 1.580a7.300 7.300 0 0 0-.080.940c0 .310.020.640.070.940l-2.030 1.580a.490.490 0 0 0-.120.610l1.920 3.320c.120.220.370.290.590.220l2.390-.960c.500.380 1.030.700 1.620.940l.360 2.540c.050.240.240.410.480.410h3.840c.240 0 .440-.170.470-.410l.360-2.540c.590-.240 1.130-.560 1.620-.940l2.390.960c.220.080.470 0 .590-.220l1.920-3.320a.490.490 0 0 0-.120-.610zM12 15.600A3.610 3.610 0 0 1 8.400 12c0-1.980 1.620-3.600 3.600-3.600s3.600 1.620 3.600 3.600-1.620 3.600-3.600 3.600z"/></svg>
</div>

<!-- annotation arrow -->
<svg style="left:100px;top:480px" width="220" height="60" viewBox="100 480 220 60">
  <defs><filter id="ash" x="-10%" y="-40%" width="120%" height="200%"><feGaussianBlur stdDeviation="1.300"/></filter></defs>
  <g transform="translate(1.500 3)" opacity=".55" filter="url(#ash)" fill="#30343c" stroke="#30343c">
    <path d="M124 514.100L280 507.300" stroke-width="9.800" stroke-linecap="round" fill="none"/>
    <path d="M271.300 492.600L300.500 506.200L273 521.500L277.200 507.400z" stroke="none"/>
  </g>
  <path d="M124 514.100L280 507.300" stroke="#ff5a49" stroke-width="9.800" stroke-linecap="round" fill="none"/>
  <path d="M271.300 492.600L300.500 506.200L273 521.500L277.200 507.400z" fill="#ff5a49"/>
</svg>
<!-- mouse cursor -->
<svg style="left:1695px;top:64px" width="13" height="19" viewBox="0 0 13 19"><path d="M1.200 1.200v14l3.300-3 2.300 5.400 2.400-1-2.300-5.300h4.500z" fill="#000" stroke="#fff" stroke-width="1.100" stroke-linejoin="round"/></svg>
<!-- window corners -->
<svg style="left:0;top:0" width="10" height="10" viewBox="0 0 10 10"><path d="M0 0h10A10 10 0 0 0 0 10z" fill="#3f8fd2"/></svg>
<svg style="left:1910px;top:0" width="10" height="10" viewBox="0 0 10 10"><path d="M10 0H0A10 10 0 0 1 10 10z" fill="#c98f5c"/></svg>
<svg style="left:0;top:958px" width="10" height="10" viewBox="0 0 10 10"><path d="M0 10h10A10 10 0 0 1 0 0z" fill="#14335c"/></svg>
<svg style="left:1910px;top:958px" width="10" height="10" viewBox="0 0 10 10"><path d="M10 10H0A10 10 0 0 0 10 0z" fill="#7a2020"/></svg>

</body>
</html>
